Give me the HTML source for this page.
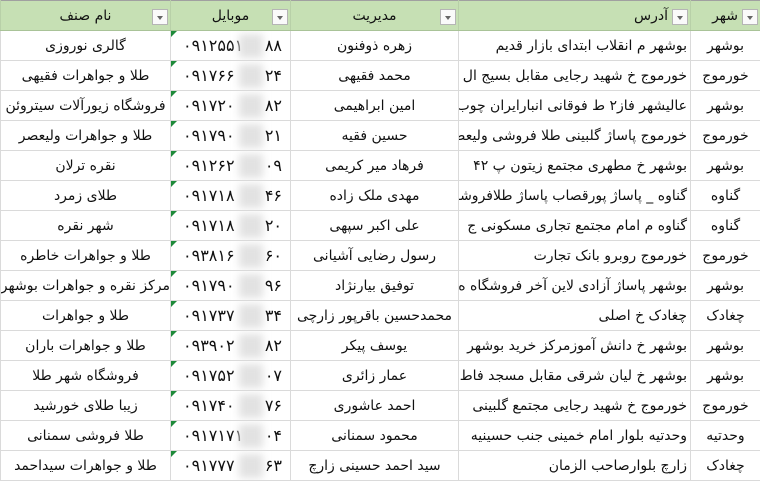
<!DOCTYPE html>
<html><head><meta charset="utf-8"><style>
*{margin:0;padding:0;box-sizing:border-box}
body{width:760px;height:477px;overflow:hidden;background:#fff;font-family:"DejaVu Sans","Liberation Sans",sans-serif;}
table{border-collapse:collapse;table-layout:fixed;direction:rtl;width:760px;position:absolute;top:0;left:0}
td,th{height:30px;border:1px solid #dadada;font-size:14px;font-weight:normal;white-space:nowrap;overflow:hidden;position:relative;color:#111}
th{background:#c6e0b4;border-top:1px solid #a0a0a0;border-bottom:1px solid #a9c398;border-left-color:#b8d0a8;border-right-color:#b8d0a8}
td{text-align:center}
td.a{text-align:right;padding-right:3px;text-overflow:clip}
.btn{position:absolute;top:8px;width:16px;height:16px;border:1px solid #b5b5b5;background:#fafafa;right:2px}
.btn:after{content:"";position:absolute;left:4px;top:6px;border-left:3.5px solid transparent;border-right:3.5px solid transparent;border-top:4px solid #666}
td.p{direction:ltr;text-align:left;padding-left:12px;font-size:16px}
.tri{position:absolute;left:0;top:0;width:0;height:0;border-top:6px solid #1e8a3a;border-right:6px solid transparent}
.bl{position:absolute;left:68px;top:3px;width:24px;height:24px;background:#e2e2e2;filter:blur(4px)}
.e{position:absolute;right:8px;top:5px}
</style></head><body>
<table>
<colgroup><col style="width:70px"><col style="width:232px"><col style="width:168px"><col style="width:120px"><col style="width:170px"></colgroup>
<tr><th style="text-align:right;padding-right:22px">شهر<span class="btn"></span></th><th style="text-align:right;padding-right:22px">آدرس<span class="btn"></span></th><th>مدیریت<span class="btn"></span></th><th>موبایل<span class="btn"></span></th><th>نام صنف<span class="btn"></span></th></tr>
<tr><td>بوشهر</td><td class="a">بوشهر م انقلاب ابتدای بازار قدیم</td><td>زهره ذوفنون</td><td class="p"><span class="tri"></span>۰۹۱۲۵۵۱<span class="bl"></span><span class="e">۸۸</span></td><td>گالری نوروزی</td></tr>
<tr><td>خورموج</td><td class="a">خورموج خ شهید رجایی مقابل بسیج ال</td><td>محمد فقیهی</td><td class="p"><span class="tri"></span>۰۹۱۷۶۶<span class="bl"></span><span class="e">۲۴</span></td><td>طلا و جواهرات فقیهی</td></tr>
<tr><td>بوشهر</td><td class="a">عالیشهر فاز۲ ط فوقانی انبارایران چوب</td><td>امین ابراهیمی</td><td class="p"><span class="tri"></span>۰۹۱۷۲۰<span class="bl"></span><span class="e">۸۲</span></td><td>فروشگاه زیورآلات سیتروئن</td></tr>
<tr><td>خورموج</td><td class="a">خورموج پاساژ گلبینی طلا فروشی ولیعصر</td><td>حسین فقیه</td><td class="p"><span class="tri"></span>۰۹۱۷۹۰<span class="bl"></span><span class="e">۲۱</span></td><td>طلا و جواهرات ولیعصر</td></tr>
<tr><td>بوشهر</td><td class="a">بوشهر خ مطهری مجتمع زیتون پ ۴۲</td><td>فرهاد میر کریمی</td><td class="p"><span class="tri"></span>۰۹۱۲۶۲<span class="bl"></span><span class="e">۰۹</span></td><td>نقره ترلان</td></tr>
<tr><td>گناوه</td><td class="a">گناوه _ پاساژ پورقصاب پاساژ طلافروشان</td><td>مهدی ملک زاده</td><td class="p"><span class="tri"></span>۰۹۱۷۱۸<span class="bl"></span><span class="e">۴۶</span></td><td>طلای زمرد</td></tr>
<tr><td>گناوه</td><td class="a">گناوه م امام مجتمع تجاری مسکونی ج</td><td>علی اکبر سپهی</td><td class="p"><span class="tri"></span>۰۹۱۷۱۸<span class="bl"></span><span class="e">۲۰</span></td><td>شهر نقره</td></tr>
<tr><td>خورموج</td><td class="a">خورموج روبرو بانک تجارت</td><td>رسول رضایی آشیانی</td><td class="p"><span class="tri"></span>۰۹۳۸۱۶<span class="bl"></span><span class="e">۶۰</span></td><td>طلا و جواهرات خاطره</td></tr>
<tr><td>بوشهر</td><td class="a">بوشهر پاساژ آزادی لاین آخر فروشگاه ه</td><td>توفیق بیارنژاد</td><td class="p"><span class="tri"></span>۰۹۱۷۹۰<span class="bl"></span><span class="e">۹۶</span></td><td>مرکز نقره و جواهرات بوشهر</td></tr>
<tr><td>چغادک</td><td class="a">چغادک خ اصلی</td><td>محمدحسین باقرپور زارچی</td><td class="p"><span class="tri"></span>۰۹۱۷۳۷<span class="bl"></span><span class="e">۳۴</span></td><td>طلا و جواهرات</td></tr>
<tr><td>بوشهر</td><td class="a">بوشهر خ دانش آموزمرکز خرید بوشهر</td><td>یوسف پیکر</td><td class="p"><span class="tri"></span>۰۹۳۹۰۲<span class="bl"></span><span class="e">۸۲</span></td><td>طلا و جواهرات باران</td></tr>
<tr><td>بوشهر</td><td class="a">بوشهر خ لیان شرقی مقابل مسجد فاط</td><td>عمار زائری</td><td class="p"><span class="tri"></span>۰۹۱۷۵۲<span class="bl"></span><span class="e">۰۷</span></td><td>فروشگاه شهر طلا</td></tr>
<tr><td>خورموج</td><td class="a">خورموج خ شهید رجایی مجتمع گلبینی</td><td>احمد عاشوری</td><td class="p"><span class="tri"></span>۰۹۱۷۴۰<span class="bl"></span><span class="e">۷۶</span></td><td>زیبا طلای خورشید</td></tr>
<tr><td>وحدتیه</td><td class="a">وحدتیه بلوار امام خمینی جنب حسینیه</td><td>محمود سمنانی</td><td class="p"><span class="tri"></span>۰۹۱۷۱۷۱<span class="bl"></span><span class="e">۰۴</span></td><td>طلا فروشی سمنانی</td></tr>
<tr><td>چغادک</td><td class="a">زارچ بلوارصاحب الزمان</td><td>سید احمد حسینی زارچ</td><td class="p"><span class="tri"></span>۰۹۱۷۷۷<span class="bl"></span><span class="e">۶۳</span></td><td>طلا و جواهرات سیداحمد</td></tr>
</table>
</body></html>
